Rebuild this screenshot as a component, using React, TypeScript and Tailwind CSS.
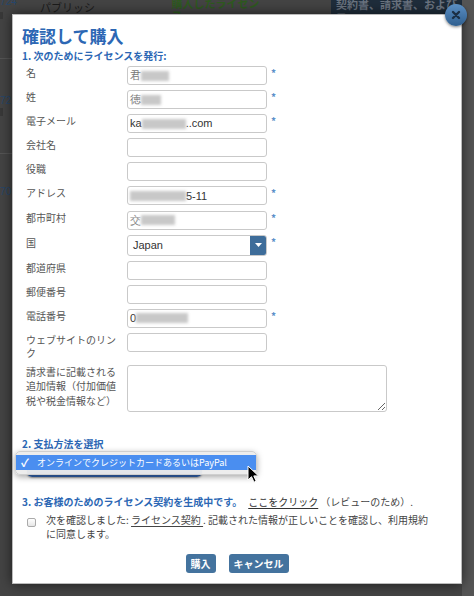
const jp = "font-['Noto_Sans_CJK_JP','Noto_Sans',sans-serif]";

function Blur({ w }: { w: number }) {
  return (
    <span
      className="inline-block h-[10px] bg-[#c8c8c8] blur-[1.5px] align-middle"
      style={{ width: w }}
    />
  );
}

function Star() {
  return <span className="ml-[4px] mt-[1px] text-[10px] font-bold leading-[12px] text-[#5d8fc9]">*</span>;
}

function Field({ children }: { children?: React.ReactNode }) {
  return (
    <div className="flex h-[19px] w-[140px] items-center overflow-hidden whitespace-nowrap rounded-[3px] border border-[#c9c9c9] bg-white pl-[2px] font-['Liberation_Sans',sans-serif] text-[11px] text-[#333]">
      {children}
    </div>
  );
}

type Row = { label: string; req?: boolean; value?: React.ReactNode };

const rows: Row[] = [
  { label: "名", req: true, value: <><span className="text-[#777]">君</span><Blur w={28} /></> },
  { label: "姓", req: true, value: <><span className="text-[#777]">徳</span><Blur w={20} /></> },
  { label: "電子メール", req: true, value: <>ka<Blur w={44} />..com</> },
  { label: "会社名" },
  { label: "役職" },
  { label: "アドレス", req: true, value: <><Blur w={56} />5-11</> },
  { label: "都市町村", req: true, value: <><span className="text-[#888]">交</span><Blur w={34} /></> },
];

const rows2: Row[] = [
  { label: "都道府県" },
  { label: "郵便番号" },
  { label: "電話番号", req: true, value: <>0<Blur w={52} /></> },
];

function Label({ children, lh = "leading-[14px]" }: { children: React.ReactNode; lh?: string }) {
  return (
    <div className="w-[101px] shrink-0 pr-[6px]">
      <div className={`${lh} text-[#555]`}>{children}</div>
    </div>
  );
}

function FormRow({ r }: { r: Row }) {
  return (
    <div className="flex items-start">
      <Label>{r.label}</Label>
      <Field>{r.value}</Field>
      {r.req && <Star />}
    </div>
  );
}

function Background() {
  return (
    <div className="flex h-full w-full bg-[#444]">
      <div className="flex w-[12px] flex-col font-['Liberation_Sans',sans-serif] text-[10px] text-[#27476b]">
        <div className="h-[59px] border-b border-[#555] leading-[8px]">
          <div className="mt-[-2px]">724</div>
          <div className="mt-[6px] h-[7px] w-[3px] bg-[#383838]" />
        </div>
        <div className="h-[95px] border-b border-[#555] pt-[36px] leading-[12px]">
          72
          <div className="mt-[1px] h-[8px] w-[3px] bg-[#383838]" />
        </div>
        <div className="pt-[32px] leading-[12px]">70</div>
      </div>
      <div className={`flex flex-1 items-start ${jp}`}>
        <div className="ml-[28px] mt-[1px] text-[11px] leading-[12px] text-[#1c1c1c]">パブリッシャ:</div>
        <div className="ml-[66px] mt-[-3px] text-[11px] font-bold leading-[12px] text-[#2e5a1f]">購入したライセンス</div>
        <div className="ml-[66px] h-[40px] w-[138px] bg-[#1f2d3b] pl-[5px] text-[11px] font-bold leading-[13px] text-[#6b7480]">
          <div className="mt-[-2px]">契約書、請求書、およびフ</div>
          <div className="text-center">ァイル</div>
        </div>
      </div>
      <div className="w-[12px] bg-[#555]" />
    </div>
  );
}

export default function App() {
  return (
    <div className={`relative h-[596px] w-[474px] overflow-hidden ${jp}`}>
      <Background />

      {/* modal */}
      <div className="absolute left-[12px] top-[14px] flex h-[570px] w-[450px] flex-col border border-[#bbb] bg-white pl-[9px] pt-[10px] text-[10px] shadow-[0_0_12px_rgba(0,0,0,0.6)]">
        <h1 className="text-[17px] font-bold leading-[21px] text-[#2c67b4]">確認して購入</h1>
        <div className="mt-[3px] font-bold leading-[14px] text-[#2c67b4]">1. 次のためにライセンスを発行:</div>

        <div className="mt-[3px] flex flex-col gap-[5.1px] pl-[4px]">
          {rows.map((r) => (
            <FormRow key={r.label} r={r} />
          ))}
          <div className="flex items-start">
            <Label>
              <div className="pt-[1px]">国</div>
            </Label>
            <div className="flex h-[21px] w-[140px] items-center overflow-hidden rounded-[3px] border border-[#c9c9c9] bg-white font-['Liberation_Sans',sans-serif] text-[11px] text-[#333]">
              <span className="flex-1 pl-[5px]">Japan</span>
              <span className="flex h-full w-[16px] items-center justify-center bg-[#3e6d9a]">
                <svg width="7" height="4" viewBox="0 0 7 4">
                  <path d="M0 0h7L3.5 4z" fill="#fff" />
                </svg>
              </span>
            </div>
            <Star />
          </div>
          {rows2.map((r) => (
            <FormRow key={r.label} r={r} />
          ))}
          <div className="flex items-start">
            <Label lh="leading-[13.3px]">ウェブサイトのリンク</Label>
            <Field />
          </div>
          <div className="flex items-start">
            <Label lh="leading-[14.5px]">請求書に記載される追加情報（付加価値税や税金情報など）</Label>
            <textarea className="h-[47px] w-[260px] resize-y rounded-[3px] border border-[#c9c9c9] bg-white" />
          </div>
        </div>

        <div className="mt-[25px] font-bold leading-[14px] text-[#2c67b4]">2. 支払方法を選択</div>
        <div className="ml-[5px] mt-[5px] h-[21px] w-[175px] rounded-[5px] bg-gradient-to-b from-[#6aa0e6] to-[#2e5ea8] shadow-[0_1px_2px_rgba(0,0,0,0.4)]" />

        <div className="mt-[18px] flex items-baseline leading-[14px]">
          <span className="font-bold text-[#2c67b4]">3. お客様のためのライセンス契約を生成中です。</span>
          <span className="ml-[6px] text-[#333] underline underline-offset-2">ここをクリック</span>
          <span className="ml-[2px] text-[#444]">（レビューのため）.</span>
        </div>

        <div className="mt-[4px] flex items-start pl-[5px]">
          <span className="mt-[5px] h-[9px] w-[9px] shrink-0 rounded-[2px] border border-[#aaa] bg-gradient-to-b from-white to-[#e6e6e6]" />
          <p className="ml-[10px] w-[392px] leading-[14.7px] text-[#444]">
            次を確認しました: <span className="underline underline-offset-2">ライセンス契約 </span>. 記載された情報が正しいことを確認し、利用規約に同意します。
          </p>
        </div>

        <div className="mt-[12px] flex justify-center gap-[13px] pr-[9px]">
          <button className="h-[19px] rounded-[3px] bg-[#44739e] px-[5px] text-[10px] font-bold leading-[19px] text-white">購入</button>
          <button className="h-[19px] rounded-[3px] bg-[#44739e] px-[5px] text-[10px] font-bold leading-[19px] text-white">キャンセル</button>
        </div>

        {/* native dropdown popup */}
        <div className="absolute left-[2px] top-[436px] h-[24px] w-[242px] rounded-[5px] border border-[#cfcfcf] bg-[#ececec]/95 py-[3px] shadow-[0_2px_6px_rgba(0,0,0,0.35)]">
          <div className="flex h-[15px] items-center bg-[#4a8ef0] pl-[5px] text-[9px] text-white">
            <span className="w-[14px] text-[11px] font-bold">✓</span>
            <span className="ml-[2px]">オンラインでクレジットカードあるいはPayPal</span>
          </div>
        </div>

        {/* cursor */}
        <svg className="absolute left-[234px] top-[450px]" width="12" height="18" viewBox="0 0 12 18">
          <path d="M1 1v14l3.5-3.3 2.5 5.5 2.2-1-2.4-5.3H11.5z" fill="#000" stroke="#fff" strokeWidth="1" />
        </svg>
      </div>

      {/* close button */}
      <div className="absolute left-[445px] top-[4px] flex h-[22px] w-[22px] items-center justify-center rounded-full bg-gradient-to-b from-[#5b8fc4] to-[#2f5f8f] shadow-[0_1px_3px_rgba(0,0,0,0.5)]">
        <svg width="10" height="10" viewBox="0 0 10 10">
          <path d="M2 2l6 6M8 2l-6 6" stroke="#1b2f45" strokeWidth="2.4" strokeLinecap="round" />
        </svg>
      </div>
    </div>
  );
}
